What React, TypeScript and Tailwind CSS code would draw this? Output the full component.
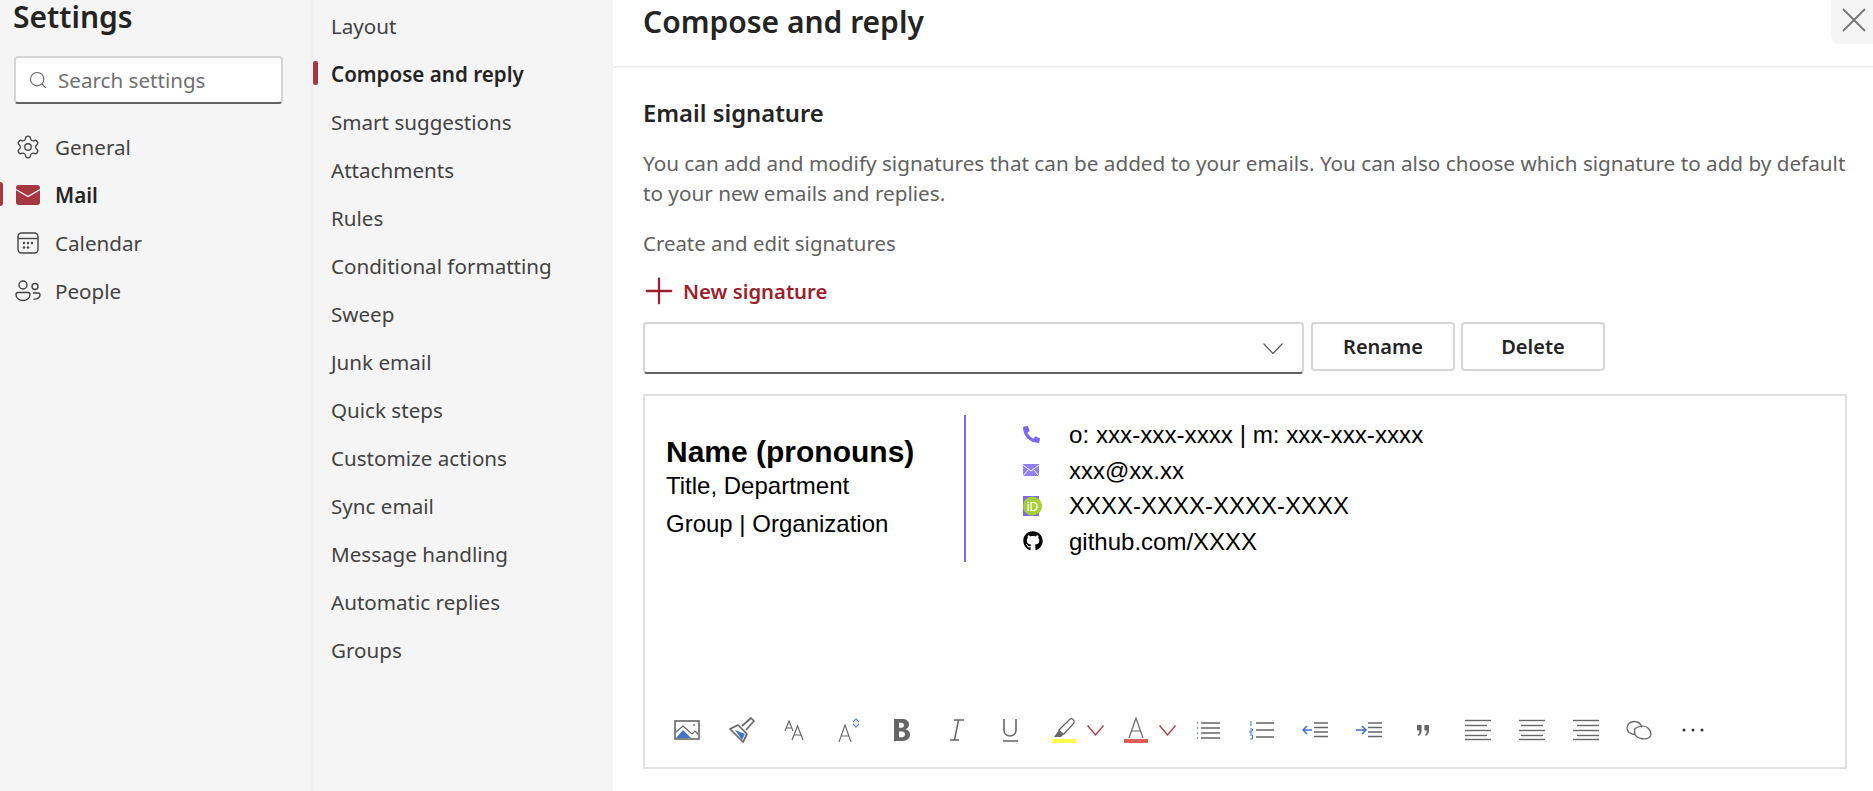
import { Settings as Gear, Search, Plus } from "lucide-react";
import { FaGithub, FaPhoneAlt } from "react-icons/fa";

const subItems = [
  "Layout",
  "Compose and reply",
  "Smart suggestions",
  "Attachments",
  "Rules",
  "Conditional formatting",
  "Sweep",
  "Junk email",
  "Quick steps",
  "Customize actions",
  "Sync email",
  "Message handling",
  "Automatic replies",
  "Groups",
];

function CalendarIcon() {
  return (
    <svg viewBox="0 0 24 24" className="w-[24px] h-[24px]" fill="none" stroke="#424242" strokeWidth="1.4">
      <rect x="2" y="2" width="20" height="20" rx="3.5" />
      <path d="M2 7.5h20" />
      <g fill="#424242" stroke="none">
        <circle cx="8" cy="12" r="1.2" />
        <circle cx="12" cy="12" r="1.2" />
        <circle cx="16" cy="12" r="1.2" />
        <circle cx="8" cy="16.5" r="1.2" />
        <circle cx="12" cy="16.5" r="1.2" />
      </g>
    </svg>
  );
}

function PeopleIcon() {
  return (
    <svg viewBox="0 0 26 22" className="w-[26px] h-[22px]" fill="none" stroke="#424242" strokeWidth="1.4">
      <circle cx="8" cy="5" r="4" />
      <circle cx="20" cy="6.5" r="3" />
      <path d="M1 14.5c0-1.2 1-2 2-2h10c1.2 0 2 .8 2 2 0 3.5-3 6-7 6s-7-2.500-7-6z" />
      <path d="M18 13h5c1.200 0 2 .8 2 1.800 0 2.700-2.500 4.700-6.500 4.200" />
    </svg>
  );
}

function MailIcon() {
  return (
    <svg viewBox="0 0 24 20" className="w-[24px] h-[20px]">
      <rect width="24" height="20" rx="3" fill="#a4373f" />
      <path d="M0 4.500l12 7 12-7" fill="none" stroke="#f5f5f5" strokeWidth="1.3" />
    </svg>
  );
}

function NavRow({ label, active, icon }: { label: string; active?: boolean; icon: React.ReactNode }) {
  return (
    <div className="relative h-[48px] flex items-center pl-[15px]">
      {active && <span className="absolute left-0 top-[11px] w-[3px] h-[24px] rounded-r-sm bg-[#a4373f]" />}
      <span className="w-[26px] flex justify-center">{icon}</span>
      <span className={active ? "ml-[14px] font-semibold text-[#242424]" : "ml-[14px] text-[#424242]"}>{label}</span>
    </div>
  );
}

function ImageIcon() {
  return (
    <svg viewBox="0 0 26 20" className="w-[26px] h-[20px]">
      <rect x="1" y="1" width="24" height="18" fill="none" stroke="#666" strokeWidth="1.600" />
      <path d="M2 18l7-8 8 8z" fill="#3f74c8" />
      <path d="M2 12l7-6 9 8 3-3 3 3" fill="none" stroke="#666" strokeWidth="1.200" />
      <circle cx="20" cy="5" r="0.900" fill="#666" />
    </svg>
  );
}

function BrushIcon() {
  return (
    <svg viewBox="0 0 27 27" className="ml-[28px] w-[27px] h-[27px]">
      <path d="M2 12l8-4 9 9-4 8z" fill="#fff" stroke="#666" strokeWidth="1.700" strokeLinejoin="round" />
      <path d="M7 13l10 4-3 6z" fill="#3f74c8" />
      <path d="M14 9l9-8 3 3-8 9" fill="#fff" stroke="#666" strokeWidth="1.700" strokeLinejoin="round" />
    </svg>
  );
}

function RedChevron() {
  return (
    <svg viewBox="0 0 17 11" className="ml-[11px] w-[17px] h-[11px]" fill="none" stroke="#a4373f" strokeWidth="1.200">
      <path d="M.5 .5l8 9.500 8-9.500" />
    </svg>
  );
}

function Lines({ className, rows }: { className: string; rows: string[] }) {
  return (
    <svg viewBox="0 0 26 22" className={className} fill="none" stroke="#666" strokeWidth="1.400">
      {rows.map((d) => (
        <path key={d} d={d} />
      ))}
    </svg>
  );
}

function Toolbar() {
  return (
    <div className="flex items-center h-[30px] pl-[29px] mb-[22px]">
      <ImageIcon />
      <BrushIcon />
      <svg viewBox="0 0 22 22" className="ml-[29px] w-[22px] h-[22px]" fill="none" stroke="#666" strokeWidth="1.200">
        <path d="M1 12L5 2l4 10M2.500 9h5" />
        <path d="M8 21l5.500-14L19 21M10 16h7" />
      </svg>
      <svg viewBox="0 0 22 24" className="ml-[32px] w-[22px] h-[24px]" fill="none" strokeWidth="1.100">
        <path d="M1 24L7 7l6 17M3 18h8" stroke="#666" />
        <path d="M15 4l3-3 3 3M15 6l3 3 3-3" stroke="#4a80d8" />
      </svg>
      <svg viewBox="0 0 16 22" className="ml-[34px] w-[16px] h-[22px]" fill="#666" fillRule="evenodd">
        <path d="M0 0h8c4.500 0 7 2 7 5.300 0 2.500-1.500 4.200-3.500 5 2.600.5 4.500 2.500 4.500 5.300C16 19.500 13 22 8.500 22H0zM5 3.800v5h2.500c1.500 0 2.500-1 2.500-2.500S9 3.800 7.500 3.800zM5 12.500v5.700h3c1.800 0 3-1.200 3-2.900s-1.200-2.800-3-2.800z" />
      </svg>
      <svg viewBox="0 0 16 22" className="ml-[39px] w-[16px] h-[22px]" fill="none" stroke="#666" strokeWidth="1.500">
        <path d="M9.500 1L5.500 21M5 1h10M1 21h9" />
      </svg>
      <svg viewBox="0 0 17 24" className="ml-[37px] w-[17px] h-[24px]" fill="none" stroke="#666" strokeWidth="1.600">
        <path d="M2 1v11c0 8 12 8 12 0V1M1 23h15" />
      </svg>
      <svg viewBox="0 0 24 26" className="ml-[33px] w-[24px] h-[26px]">
        <path d="M7 13L18 2c2-1 5 1 4 4L12 17l-4 0z" fill="none" stroke="#666" strokeWidth="1.300" />
        <path d="M2 20l5-7 5 4-3 3z" fill="#666" />
        <rect y="22" width="24" height="4" fill="#ffff4d" />
      </svg>
      <RedChevron />
      <svg viewBox="0 0 24 26" className="ml-[20px] w-[24px] h-[26px]">
        <path d="M5 21L12 1l7 20M7.500 14h9" fill="none" stroke="#666" strokeWidth="1.200" />
        <rect y="22" width="24" height="4" fill="#dc5f58" />
      </svg>
      <RedChevron />
      <svg viewBox="0 0 24 20" className="ml-[20px] w-[24px] h-[20px]" fill="none" stroke="#666" strokeWidth="1.300">
        <path d="M5 3h19M5 8h19M5 13h19M5 18h19" />
        <path d="M1 3h1.500M1 8h1.500M1 13h1.500M1 18h1.500" stroke="#3f74c8" strokeDasharray="1 1" />
      </svg>
      <svg viewBox="0 0 25 20" className="ml-[29px] w-[25px] h-[20px]" fill="none" stroke="#666" strokeWidth="1.300">
        <path d="M7 3h18M7 10h18M7 17h18" />
        <path d="M2 1v5M1 9h2.500v2H1v2h2.500M1 15h2.500v4H1" stroke="#3f74c8" strokeWidth="1" />
      </svg>
      <svg viewBox="0 0 26 20" className="ml-[28px] w-[26px] h-[20px]" fill="none" stroke="#666" strokeWidth="1.300">
        <path d="M12 3h14M12 7.500h14M12 12h14M12 16.500h14" />
        <path d="M10 10H1M5 6l-4 4 4 4" stroke="#3f74c8" strokeWidth="1.500" />
      </svg>
      <svg viewBox="0 0 26 20" className="ml-[28px] w-[26px] h-[20px]" fill="none" stroke="#666" strokeWidth="1.300">
        <path d="M12 3h14M12 7.500h14M12 12h14M12 16.500h14" />
        <path d="M0 10h9M6 6l4 4-4 4" stroke="#3f74c8" strokeWidth="1.500" />
      </svg>
      <svg viewBox="0 0 13 12" className="ml-[35px] w-[12px] h-[11px]" fill="#666">
        <path d="M0 0h5v5.500C5 9 4 11 1.500 12l-.8-1.400C2 10 2.500 9 2.600 6H0zM8 0h5v5.500C13 9 12 11 9.500 12l-.8-1.400C10 10 10.500 9 10.600 6H8z" />
      </svg>
      <Lines className="ml-[36px] w-[26px] h-[22px]" rows={["M0 1.500h26", "M0 6.500h22", "M0 11.500h26", "M0 16.500h22", "M0 20.500h26"]} />
      <Lines className="ml-[28px] w-[26px] h-[22px]" rows={["M0 1.500h26", "M2 6.500h22", "M0 11.500h26", "M2 16.500h22", "M0 20.500h26"]} />
      <Lines className="ml-[28px] w-[26px] h-[22px]" rows={["M0 1.500h26", "M4 6.500h22", "M0 11.500h26", "M4 16.500h22", "M0 20.500h26"]} />
      <svg viewBox="0 0 26 20" className="ml-[27px] w-[26px] h-[20px]" fill="none" stroke="#666" strokeWidth="1.300">
        <path d="M9 14.500C4 14.500 1 11.500 1 8s3-6.500 7-6.500 7 2.500 8 6" />
        <path d="M9 8.500C13.500 5.500 19 5 22.500 8.500s3 8 0 9.500-9 1-12-1.500S8.500 11 9 8.500z" />
      </svg>
      <svg viewBox="0 0 22 4" className="ml-[30px] w-[22px] h-[4px]" fill="#333">
        <circle cx="2" cy="2" r="1.500" />
        <circle cx="11" cy="2" r="1.500" />
        <circle cx="20" cy="2" r="1.500" />
      </svg>
    </div>
  );
}

function Signature() {
  return (
    <div className="flex pl-[21px] pt-[19px] font-['Liberation_Sans',Arial,sans-serif] text-black">
      <div className="w-[300px] h-[147px] border-r-2 border-[#7b68ee] pt-[19px] text-[24px] leading-[38px]">
        <div className="text-[30px] font-bold leading-[36px]">Name (pronouns)</div>
        <div className="-mt-[3px]">Title, Department</div>
        <div>Group | Organization</div>
      </div>
      <div className="ml-[57px] pt-[2px] text-[24px] leading-[35.500px]">
        <div className="flex items-center text-[24.200px]">
          <span className="w-[46px]">
            <FaPhoneAlt className="text-[#7b68ee]" size={17} />
          </span>
          o: xxx-xxx-xxxx | m: xxx-xxx-xxxx
        </div>
        <div className="flex items-center">
          <span className="w-[46px]">
            <svg viewBox="0 0 16 12" className="w-[16px] h-[12px]">
              <rect width="16" height="12" fill="#8f7ff0" />
              <path d="M0 1l8 6 8-6M0 12l5-6M16 12l-5-6" fill="none" stroke="#fff" strokeWidth="1" />
            </svg>
          </span>
          xxx@xx.xx
        </div>
        <div className="flex items-center">
          <span className="w-[46px]">
            <svg viewBox="0 0 19 20" className="w-[19px] h-[20px]">
              <rect width="16" height="20" fill="#7b68ee" />
              <circle cx="9.500" cy="10" r="9.500" fill="#a6ce39" />
              <text x="9.500" y="14.500" textAnchor="middle" fontSize="12" fill="#fff" fontFamily="Liberation Sans">
                iD
              </text>
            </svg>
          </span>
          XXXX-XXXX-XXXX-XXXX
        </div>
        <div className="flex items-center">
          <span className="w-[46px]">
            <FaGithub size={20} className="text-black" />
          </span>
          github.com/XXXX
        </div>
      </div>
    </div>
  );
}

export default function App() {
  return (
    <div className="flex w-[1873px] h-[791px] overflow-hidden bg-white font-['Noto_Sans',sans-serif] text-[20.600px]">
      <aside className="w-[313px] shrink-0 bg-[#f5f5f5] border-r-2 border-[#f0f0f0]">
        <h1 className="pl-[13px] h-[36px] text-[30px] leading-[34px] font-semibold text-[#242424]">Settings</h1>
        <div className="ml-[14px] mt-[20px] w-[269px] h-[48px] flex items-center rounded-[4px] bg-white border-2 border-[#d6d6d6] border-b-[#616161] pl-[12px]">
          <Search size={20} strokeWidth={1.300} className="text-[#616161]" />
          <span className="ml-[10px] text-[#707070]">Search settings</span>
        </div>
        <div className="mt-[19px]">
          <NavRow label="General" icon={<Gear size={30} strokeWidth={1.200} className="text-[#424242]" />} />
          <NavRow label="Mail" active icon={<MailIcon />} />
          <NavRow label="Calendar" icon={<CalendarIcon />} />
          <NavRow label="People" icon={<PeopleIcon />} />
        </div>
      </aside>
      <nav className="w-[300px] shrink-0 bg-[#f5f5f5] pt-[2px]">
        {subItems.map((item) => {
          const active = item === "Compose and reply";
          return (
            <div key={item} className="relative h-[48px] flex items-center pl-[18px]">
              {active && <span className="absolute left-0 top-[11px] w-[5px] h-[24px] rounded-[2px] bg-[#a4373f]" />}
              <span className={active ? "font-semibold text-[#242424]" : "text-[#424242]"}>{item}</span>
            </div>
          );
        })}
      </nav>
      <main className="flex-1 min-w-0">
        <header className="relative h-[68px] border-b-2 border-[#efefef] pl-[30px]">
          <h2 className="text-[30px] leading-[44px] font-semibold text-[#242424]">Compose and reply</h2>
          <button className="absolute right-0 top-0 w-[42px] h-[44px] bg-[#f5f5f5] rounded-bl-lg flex items-center justify-center">
            <svg viewBox="0 0 24 24" className="w-[24px] h-[24px] ml-[4px] mb-[4px]" fill="none" stroke="#777" strokeWidth="1.800">
              <path d="M1 1l22 22M23 1L1 23" />
            </svg>
          </button>
        </header>
        <section className="pl-[30px] pr-[26px]">
          <h3 className="mt-[28px] text-[23.800px] leading-[34px] font-semibold text-[#242424]">Email signature</h3>
          <p className="mt-[18px] -mr-[6px] text-[20.700px] leading-[30px] text-[#616161]">
            You can add and modify signatures that can be added to your emails. You can also choose which signature to add by default to your new emails and replies.
          </p>
          <p className="mt-[20px] text-[20.400px] leading-[30px] text-[#616161]">Create and edit signatures</p>
          <div className="mt-[18px] flex items-center h-[30px] text-[#9c1f2c] text-[20.300px] font-semibold">
            <Plus size={42} strokeWidth={1.300} className="-ml-[5px] -my-[6px]" />
            <span className="ml-[3px]">New signature</span>
          </div>
          <div className="mt-[16px] flex items-start text-[20px]">
            <div className="w-[661px] h-[52px] rounded-[4px] bg-white border-2 border-[#d6d6d6] border-b-[#616161] flex items-center justify-end pr-[19px]">
              <svg viewBox="0 0 20 11" className="w-[20px] h-[11px]" fill="none" stroke="#555" strokeWidth="1.200">
                <path d="M.5 .5l9.500 10 9.500-10" />
              </svg>
            </div>
            <button className="ml-[7px] w-[144px] h-[49px] rounded-[4px] border-2 border-[#d6d6d6] font-semibold text-[#242424]">Rename</button>
            <button className="ml-[6px] w-[144px] h-[49px] rounded-[4px] border-2 border-[#d6d6d6] font-semibold text-[#242424]">Delete</button>
          </div>
          <div className="mt-[20px] w-[1204px] h-[375px] border-2 border-[#e0e0e0] flex flex-col justify-between">
            <Signature />
            <Toolbar />
          </div>
        </section>
      </main>
    </div>
  );
}
